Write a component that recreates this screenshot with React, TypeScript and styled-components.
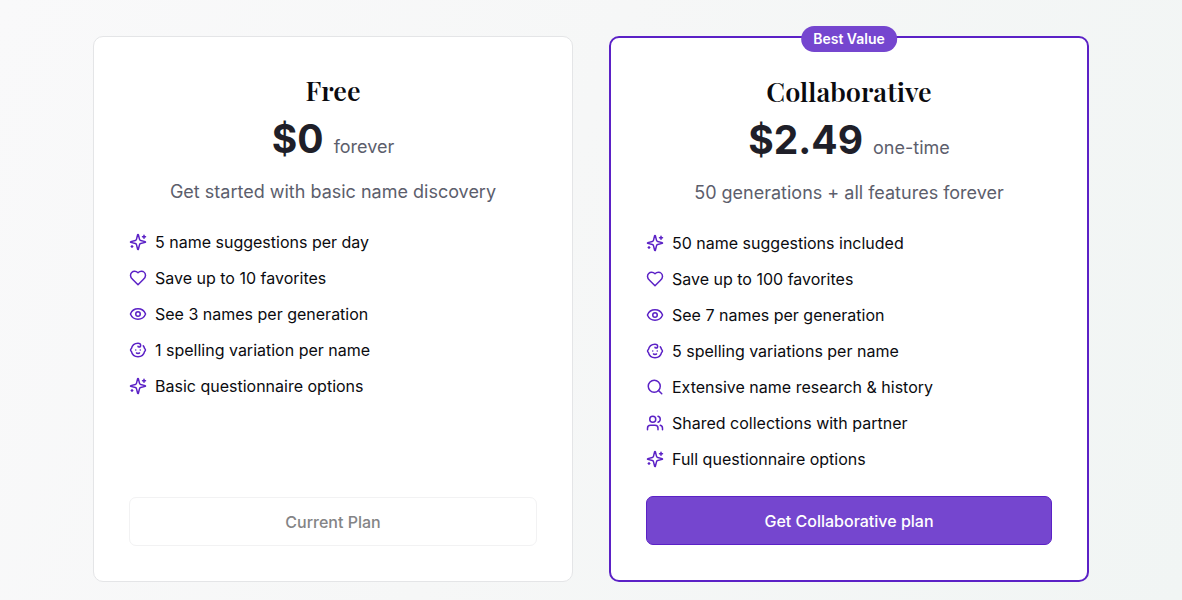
import React, { type ComponentType, type SVGProps } from "react";
import styled, { createGlobalStyle, css } from "styled-components";
import { Eye, Search, Users } from "lucide-react";

const GlobalStyle = createGlobalStyle`
  *, *::before, *::after { box-sizing: border-box; }
  html { min-height: 100%; background: linear-gradient(110deg, #f9f9fa 0%, #f6f7f7 45%, #f1f5f4 100%); }
  body {
    margin: 0;
    color: #0b0b0f;
    font-family: Inter, "Liberation Sans", sans-serif;
    font-size: 16px;
  }
`;

const Page = styled.main`
  padding: 36px 24px 18px;
`;

const PlanGrid = styled.div`
  display: grid;
  grid-template-columns: repeat(auto-fit, minmax(360px, 1fr));
  gap: 36px;
  max-width: 996px;
  margin: 0 auto;
`;

const Card = styled.article<{ $featured?: boolean }>`
  position: relative;
  display: flex;
  flex-direction: column;
  padding: 36px 35px 35px;
  background: #ffffff;
  border: 1px solid #e4e5e7;
  border-radius: 10px;
  ${({ $featured }) => $featured && css`
    border: 2px solid #5b21c6;
  `}
`;

const Badge = styled.span`
  position: absolute;
  top: -12px;
  left: 50%;
  transform: translateX(-50%);
  padding: 0 12px;
  border-radius: 13px;
  background: #7546cf;
  color: #ffffff;
  font-size: 14px;
  font-weight: 600;
  line-height: 26px;
  white-space: nowrap;
`;

const Header = styled.header`
  display: flex;
  flex-direction: column;
  align-items: center;
  text-align: center;
`;

const Title = styled.h2`
  margin: 0;
  font-family: "Playfair Display", "Liberation Serif", serif;
  font-size: 27px;
  font-weight: 600;
  line-height: 34px;
`;

const Price = styled.p`
  display: flex;
  align-items: baseline;
  gap: 10px;
  margin: 10px 0 0;
`;

const Amount = styled.strong`
  color: #1f1f29;
  font-size: 39px;
  font-weight: 700;
  line-height: 44px;
`;

const Period = styled.span`
  color: #5c5e6c;
  font-size: 18px;
  line-height: 24px;
`;

const Summary = styled.p`
  margin: 18px 0 0;
  color: #5c5e6c;
  font-size: 18px;
  line-height: 26px;
`;

const FeatureList = styled.ul`
  display: flex;
  flex: 1;
  flex-direction: column;
  gap: 12px;
  margin: 25px 0;
  padding: 0;
  list-style: none;
`;

const Feature = styled.li`
  display: flex;
  align-items: center;
  gap: 8px;
  line-height: 24px;

  svg {
    flex: none;
    width: 18px;
    height: 18px;
    color: #5b21c6;
  }
`;

const PlanButton = styled.button`
  width: 100%;
  height: 49px;
  border: 1px solid #5b21c6;
  border-radius: 7px;
  background: #7546cf;
  color: #ffffff;
  font-family: inherit;
  font-size: 16px;
  font-weight: 500;
  cursor: pointer;

  &:disabled {
    border-color: #f2f2f3;
    background: #ffffff;
    color: #848486;
    cursor: default;
  }
`;

const LineIcon = styled.svg.attrs({ viewBox: "0 0 24 24" })`
  fill: none;
  stroke: currentColor;
  stroke-width: 2;
  stroke-linecap: round;
  stroke-linejoin: round;
`;

const SparklesIcon = () => (
  <LineIcon aria-hidden="true">
    <path d="M9.937 15.5A2 2 0 0 0 8.5 14.063l-6.135-1.582a.5.5 0 0 1 0-.962L8.5 9.936A2 2 0 0 0 9.937 8.5l1.582-6.135a.5.5 0 0 1 .963 0L14.063 8.5A2 2 0 0 0 15.5 9.937l6.135 1.581a.5.5 0 0 1 0 .964L15.5 14.063a2 2 0 0 0-1.437 1.437l-1.582 6.135a.5.5 0 0 1-.963 0z" />
    <path d="M20 3v4M22 5h-4M4 17v2M5 18H3" />
  </LineIcon>
);

const HeartIcon = () => (
  <LineIcon aria-hidden="true">
    <path d="M19 14c1.49-1.46 3-3.21 3-5.5A5.5 5.5 0 0 0 16.5 3c-1.76 0-3 .5-4.5 2-1.5-1.5-2.74-2-4.5-2A5.5 5.5 0 0 0 2 8.5c0 2.3 1.5 4.05 3 5.5l7 7Z" />
  </LineIcon>
);

const BabyIcon = () => (
  <LineIcon aria-hidden="true">
    <path d="M9 12h.01M15 12h.01M10 16c.5.3 1.2.5 2 .5s1.5-.2 2-.5" />
    <path d="M19 6.3a9 9 0 0 1 1.8 3.9 2 2 0 0 1 0 3.6 9 9 0 0 1-17.6 0 2 2 0 0 1 0-3.6A9 9 0 0 1 12 3c2 0 3.5 1.1 3.5 2.5s-.9 2.5-2 2.5c-.8 0-1.5-.4-1.5-1" />
  </LineIcon>
);

type Plan = {
  name: string;
  price: string;
  period: string;
  summary: string;
  action: string;
  current?: boolean;
  badge?: string;
  features: { icon: ComponentType<SVGProps<SVGSVGElement>>; text: string }[];
};

const plans: Plan[] = [
  {
    name: "Free",
    price: "$0",
    period: "forever",
    summary: "Get started with basic name discovery",
    action: "Current Plan",
    current: true,
    features: [
      { icon: SparklesIcon, text: "5 name suggestions per day" },
      { icon: HeartIcon, text: "Save up to 10 favorites" },
      { icon: Eye, text: "See 3 names per generation" },
      { icon: BabyIcon, text: "1 spelling variation per name" },
      { icon: SparklesIcon, text: "Basic questionnaire options" },
    ],
  },
  {
    name: "Collaborative",
    price: "$2.49",
    period: "one-time",
    summary: "50 generations + all features forever",
    action: "Get Collaborative plan",
    badge: "Best Value",
    features: [
      { icon: SparklesIcon, text: "50 name suggestions included" },
      { icon: HeartIcon, text: "Save up to 100 favorites" },
      { icon: Eye, text: "See 7 names per generation" },
      { icon: BabyIcon, text: "5 spelling variations per name" },
      { icon: Search, text: "Extensive name research & history" },
      { icon: Users, text: "Shared collections with partner" },
      { icon: SparklesIcon, text: "Full questionnaire options" },
    ],
  },
];

export default function App() {
  return (
    <>
      <GlobalStyle />
      <Page>
        <PlanGrid>
          {plans.map((plan) => (
            <Card key={plan.name} $featured={Boolean(plan.badge)}>
              {plan.badge && <Badge>{plan.badge}</Badge>}
              <Header>
                <Title>{plan.name}</Title>
                <Price>
                  <Amount>{plan.price}</Amount>
                  <Period>{plan.period}</Period>
                </Price>
                <Summary>{plan.summary}</Summary>
              </Header>
              <FeatureList>
                {plan.features.map(({ icon: Icon, text }) => (
                  <Feature key={text}>
                    <Icon />
                    {text}
                  </Feature>
                ))}
              </FeatureList>
              <PlanButton type="button" disabled={plan.current}>{plan.action}</PlanButton>
            </Card>
          ))}
        </PlanGrid>
      </Page>
    </>
  );
}
